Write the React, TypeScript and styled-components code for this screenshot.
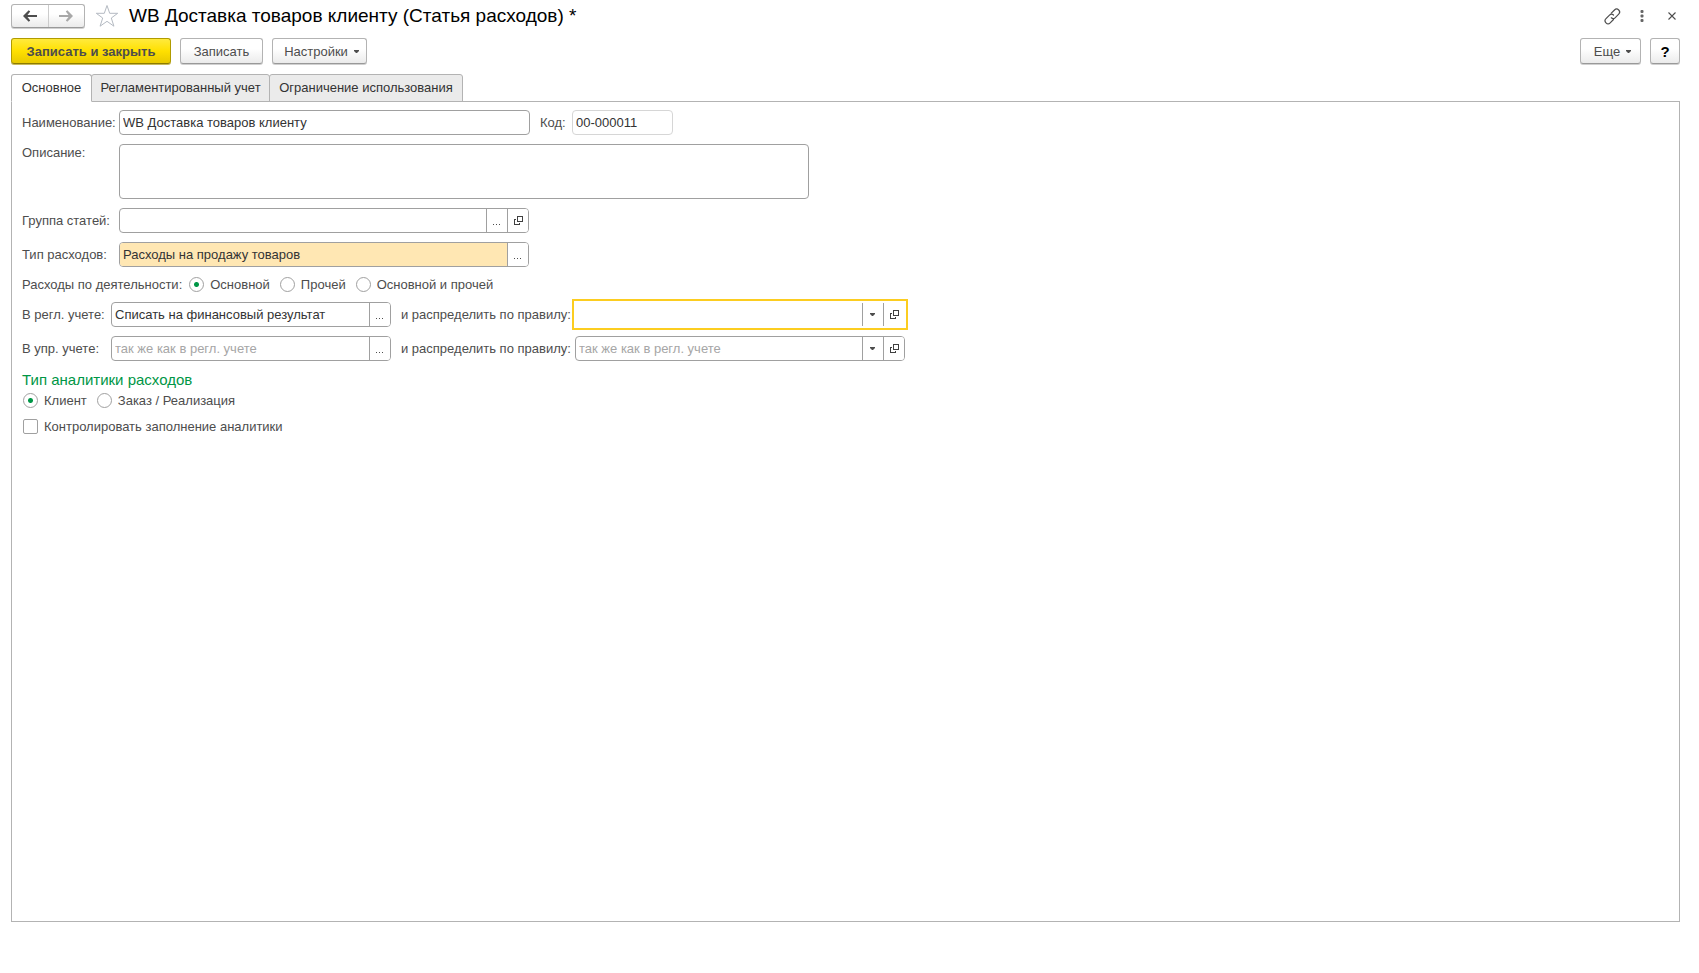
import React, { useId, useState } from 'react';
import styled, { createGlobalStyle, css } from 'styled-components';

const GlobalStyle = createGlobalStyle`
  *, *::before, *::after { box-sizing: border-box; }
  body {
    margin: 0;
    background: #fff;
    color: #4d4d4d;
    font: 13px/15px "Liberation Sans", Arial, sans-serif;
  }
  button, input, textarea { font: inherit; color: inherit; margin: 0; }
`;

const Page = styled.main`
  display: flex;
  flex-direction: column;
  min-height: 100vh;
  padding: 4px 19px 51px 11px;
`;

const TitleBar = styled.header`
  display: flex;
  align-items: center;
  height: 24px;
`;

const raised = css`
  border: 1px solid #b3b3b3;
  border-bottom-color: #999;
  border-radius: 3px;
  background: linear-gradient(#fff 40%, #ebebeb);
  box-shadow: 0 1px 0 #d0d0d0;
`;

const NavGroup = styled.nav`
  ${raised}
  display: flex;
  width: 74px;
  height: 24px;
`;

const NavButton = styled.button`
  flex: 1;
  display: flex;
  align-items: center;
  justify-content: center;
  padding: 0;
  border: 0;
  background: none;
  color: #4d4d4d;
  & + & { border-left: 1px solid #ccc; }
  &:disabled { color: #a8a8a8; }
`;

const IconButton = styled.button`
  display: flex;
  align-items: center;
  justify-content: center;
  width: 24px;
  height: 24px;
  padding: 0;
  border: 0;
  background: none;
  color: #4d4d4d;
`;

const StarButton = styled(IconButton)`
  margin: 0 10px;
`;

const Title = styled.h1`
  flex: 1;
  margin: 0;
  color: #000;
  font-size: 19px;
  line-height: 24px;
  font-weight: 400;
`;

const WindowTools = styled.div`
  display: flex;
  gap: 6px;
  margin-right: -4px;
`;

const CommandBar = styled.div`
  display: flex;
  gap: 9px;
  margin-top: 10px;
`;

const Spacer = styled.div`
  flex: 1;
`;

const Command = styled.button<{ $width: number; $primary?: boolean; $menu?: boolean }>`
  ${raised}
  display: flex;
  align-items: center;
  justify-content: center;
  gap: 6px;
  width: ${p => p.$width}px;
  height: 26px;
  padding: 1px 0 0 ${p => (p.$menu ? 4 : 0)}px;
  font-size: 13px;
  ${p => p.$primary && css`
    border-color: #b09b00;
    border-bottom-color: #8c7b00;
    background: linear-gradient(#ffea3d, #ffe000 50%, #e8c900);
    box-shadow: 0 1px 0 #c8b95a;
    font-weight: 700;
  `}
`;

const Help = styled(Command)`
  color: #000;
  font-size: 15px;
  font-weight: 700;
`;

const Tabs = styled.div`
  display: flex;
  margin-top: 10px;
`;

const Tab = styled.button<{ $width: number }>`
  width: ${p => p.$width}px;
  height: 28px;
  margin: 0 -1px -1px 0;
  padding: 0 0 1px;
  border: 1px solid #b3b3b3;
  border-radius: 3px 3px 0 0;
  background: #ebebeb;
  color: #333;
  &[aria-selected='true'] {
    position: relative;
    border-bottom-color: #fff;
    background: #fff;
  }
`;

const Panel = styled.section`
  flex: 1;
  display: flex;
  flex-direction: column;
  align-items: flex-start;
  gap: 9px;
  padding: 8px 10px;
  border: 1px solid #b3b3b3;
`;

const Row = styled.div`
  display: flex;
  align-items: center;
`;

const TopRow = styled(Row)`
  align-items: flex-start;
  label { padding-top: 1px; }
`;

const Label = styled.label<{ $width: number }>`
  width: ${p => p.$width}px;
  white-space: nowrap;
`;

const Box = styled.div<{ $width: number; $tone?: 'muted' | 'required' }>`
  display: flex;
  width: ${p => p.$width}px;
  height: 25px;
  overflow: hidden;
  border: 1px solid ${p => (p.$tone === 'muted' ? '#d6d6d6' : '#a0a0a0')};
  border-radius: 4px;
  background: #fff;
  input { background: ${p => (p.$tone === 'required' ? '#ffe7b3' : 'transparent')}; }
`;

/* The active field trades its thin border for a thick frame drawn round it. */
const ActiveBox = styled.div<{ $width: number }>`
  display: flex;
  width: ${p => p.$width}px;
  height: 31px;
  margin: -3px;
  padding: 2px;
  border: 2px solid #fccd20;
  background: #fff;
`;

const TextInput = styled.input`
  flex: 1;
  min-width: 0;
  height: 100%;
  padding: 0 3px;
  border: 0;
  outline: 0;
  color: #333;
  &::placeholder { color: #a6a6a6; opacity: 1; }
`;

const TextArea = styled.textarea`
  width: 690px;
  height: 55px;
  padding: 4px 3px;
  border: 1px solid #a0a0a0;
  border-radius: 4px;
  outline: 0;
  resize: none;
`;

const BoxButton = styled.button`
  display: flex;
  align-items: center;
  justify-content: center;
  width: 21px;
  padding: 0 1px 0 0;
  border: 0;
  border-left: 1px solid #a0a0a0;
  background: #fff;
`;

const Group = styled.fieldset`
  display: flex;
  align-items: center;
  height: 17px;
  margin: 0;
  padding: 0;
  border: 0;
`;

const GroupTitle = styled.span`
  margin-right: 6px;
`;

const Choice = styled.label`
  display: flex;
  align-items: center;
  height: 17px;
  gap: 6px;
  margin: 0 9px 0 1px;
  white-space: nowrap;
`;

const Radio = styled.input`
  appearance: none;
  width: 15px;
  height: 15px;
  border: 1px solid #a0a0a0;
  border-radius: 50%;
  background: #fff;
  &:checked { background: radial-gradient(circle, #009646 2px, #fff 3px); }
`;

const Check = styled.input`
  appearance: none;
  width: 15px;
  height: 15px;
  border: 1px solid #a0a0a0;
  border-radius: 2px;
  background: #fff;
  &:checked { background: #009646; }
`;

const Section = styled.div`
  display: flex;
  flex-direction: column;
  gap: 2px;
`;

const SectionTitle = styled.h2`
  margin: 0;
  color: #009646;
  font-size: 15px;
  line-height: 20px;
  font-weight: 400;
`;

const ArrowIcon = ({ flip }: { flip?: boolean }) => (
  <svg width="14" height="12" viewBox="0 0 14 12" fill="currentColor" aria-hidden>
    {flip ? (
      <path d="M0 5h9.500L6.800 1.600 8.300.3 14 6l-5.700 5.700-1.500-1.300L9.500 7H0z" />
    ) : (
      <path d="M14 5H4.500l2.700-3.400L5.700.3 0 6l5.700 5.700 1.500-1.300L4.500 7H14z" />
    )}
  </svg>
);

const StarIcon = () => (
  <svg width="24" height="24" viewBox="0 0 24 24" fill="#fff" stroke="#b4bac2" aria-hidden>
    <path d="M12 1.500l2.700 7.800h8L16.300 14l2.600 8.200L12 17.300 5.100 22.200 7.700 14 1.300 9.300h8z" />
  </svg>
);

const LinkIcon = () => (
  <svg width="17" height="17" viewBox="0 0 17 17" fill="none" stroke="currentColor" strokeWidth="1.200" strokeLinecap="round" aria-hidden>
    <path d="M7.300 5.200l3.200-3.200a2.900 2.900 0 0 1 4.200 4.200l-3.400 3.400a2.900 2.900 0 0 1-4 .2" />
    <path d="M9.500 11.500l-3.300 3.300a2.900 2.900 0 0 1-4.200-4.200l3.500-3.500a2.900 2.900 0 0 1 4-.1" />
  </svg>
);

const DotsIcon = () => (
  <svg width="4" height="12" viewBox="0 0 4 12" fill="#666" aria-hidden>
    <rect x=".5" width="3" height="3" rx="1" />
    <rect x=".5" y="4.500" width="3" height="3" rx="1" />
    <rect x=".5" y="9" width="3" height="3" rx="1" />
  </svg>
);

const CloseIcon = () => (
  <svg width="8" height="8" viewBox="0 0 8 8" stroke="currentColor" strokeWidth="1.100" aria-hidden>
    <path d="M.5.5l7 7M7.500.5l-7 7" />
  </svg>
);

const CaretIcon = () => (
  <svg width="5" height="3" viewBox="0 0 5 3" fill="currentColor" aria-hidden>
    <path d="M0 0h5v1L3 3H2L0 1z" />
  </svg>
);

const OpenIcon = () => (
  <svg width="11" height="9" viewBox="-2 0 11 9" fill="none" stroke="#404040" shapeRendering="crispEdges" aria-hidden>
    <path d="M3.500 .5h5v5h-5zM2 3.500H.5v5h5V7" />
  </svg>
);

const DotsLineIcon = () => (
  <svg width="7" height="9" viewBox="0 0 7 9" fill="#4d4d4d" shapeRendering="crispEdges" aria-hidden>
    <path d="M0 8h1v1H0zM3 8h1v1H3zM6 8h1v1H6z" />
  </svg>
);

type Tool = 'pick' | 'list' | 'open';
const toolLabels: Record<Tool, string> = { pick: 'Выбрать', list: 'Показать список', open: 'Открыть' };
const toolIcons = { pick: DotsLineIcon, list: CaretIcon, open: OpenIcon };

interface FieldProps {
  label: string;
  labelWidth: number;
  width: number;
  value?: string;
  placeholder?: string;
  tone?: 'muted' | 'required';
  tools?: Tool[];
  active?: boolean;
}

function Field({ label, labelWidth, width, value = '', placeholder, tone, tools = [], active }: FieldProps) {
  const id = useId();
  const content = (
    <>
      <TextInput id={id} defaultValue={value} placeholder={placeholder} readOnly={tone === 'muted'} />
      {tools.map(tool => {
        const Icon = toolIcons[tool];
        return (
          <BoxButton key={tool} type="button" aria-label={toolLabels[tool]}>
            <Icon />
          </BoxButton>
        );
      })}
    </>
  );
  return (
    <>
      <Label htmlFor={id} $width={labelWidth}>{label}</Label>
      {active ? <ActiveBox $width={width + 6}>{content}</ActiveBox> : <Box $width={width} $tone={tone}>{content}</Box>}
    </>
  );
}

const Gap = styled.span`
  width: 10px;
`;

const tabs = [
  { title: 'Основное', width: 81 },
  { title: 'Регламентированный учет', width: 179 },
  { title: 'Ограничение использования', width: 194 },
];

export default function App() {
  const [tab, setTab] = useState(0);
  const sameAsRegulated = 'так же как в регл. учете';

  return (
    <>
      <GlobalStyle />
      <Page>
        <TitleBar>
          <NavGroup aria-label="История">
            <NavButton type="button" aria-label="Назад"><ArrowIcon /></NavButton>
            <NavButton type="button" aria-label="Вперед" disabled><ArrowIcon flip /></NavButton>
          </NavGroup>
          <StarButton type="button" aria-label="В избранное"><StarIcon /></StarButton>
          <Title>WB Доставка товаров клиенту (Статья расходов) *</Title>
          <WindowTools>
            <IconButton type="button" aria-label="Получить ссылку"><LinkIcon /></IconButton>
            <IconButton type="button" aria-label="Меню"><DotsIcon /></IconButton>
            <IconButton type="button" aria-label="Закрыть"><CloseIcon /></IconButton>
          </WindowTools>
        </TitleBar>

        <CommandBar>
          <Command type="button" $width={160} $primary>Записать и закрыть</Command>
          <Command type="button" $width={83}>Записать</Command>
          <Command type="button" $width={95} $menu>Настройки <CaretIcon /></Command>
          <Spacer />
          <Command type="button" $width={61} $menu>Еще <CaretIcon /></Command>
          <Help type="button" $width={30} aria-label="Справка">?</Help>
        </CommandBar>

        <Tabs role="tablist">
          {tabs.map(({ title, width }, i) => (
            <Tab key={title} type="button" role="tab" $width={width} aria-selected={tab === i} onClick={() => setTab(i)}>
              {title}
            </Tab>
          ))}
        </Tabs>

        <Panel role="tabpanel">
          <Row>
            <Field label="Наименование:" labelWidth={97} width={411} value="WB Доставка товаров клиенту" />
            <Gap />
            <Field label="Код:" labelWidth={32} width={101} value="00-000011" tone="muted" />
          </Row>
          <TopRow>
            <Label htmlFor="description" $width={97}>Описание:</Label>
            <TextArea id="description" />
          </TopRow>
          <Row>
            <Field label="Группа статей:" labelWidth={97} width={410} tools={['pick', 'open']} />
          </Row>
          <Row>
            <Field label="Тип расходов:" labelWidth={97} width={410} value="Расходы на продажу товаров" tone="required" tools={['pick']} />
          </Row>
          <Group aria-labelledby="activity">
            <GroupTitle id="activity">Расходы по деятельности:</GroupTitle>
            <Choice><Radio type="radio" name="activity" defaultChecked />Основной</Choice>
            <Choice><Radio type="radio" name="activity" />Прочей</Choice>
            <Choice><Radio type="radio" name="activity" />Основной и прочей</Choice>
          </Group>
          <Row>
            <Field label="В регл. учете:" labelWidth={89} width={280} value="Списать на финансовый результат" tools={['pick']} />
            <Gap />
            <Field label="и распределить по правилу:" labelWidth={174} width={330} tools={['list', 'open']} active />
          </Row>
          <Row>
            <Field label="В упр. учете:" labelWidth={89} width={280} placeholder={sameAsRegulated} tools={['pick']} />
            <Gap />
            <Field label="и распределить по правилу:" labelWidth={174} width={330} placeholder={sameAsRegulated} tools={['list', 'open']} />
          </Row>
          <Section>
            <SectionTitle id="analytics">Тип аналитики расходов</SectionTitle>
            <Group aria-labelledby="analytics">
              <Choice><Radio type="radio" name="analytics" defaultChecked />Клиент</Choice>
              <Choice><Radio type="radio" name="analytics" />Заказ / Реализация</Choice>
            </Group>
          </Section>
          <Choice><Check type="checkbox" />Контролировать заполнение аналитики</Choice>
        </Panel>
      </Page>
    </>
  );
}
